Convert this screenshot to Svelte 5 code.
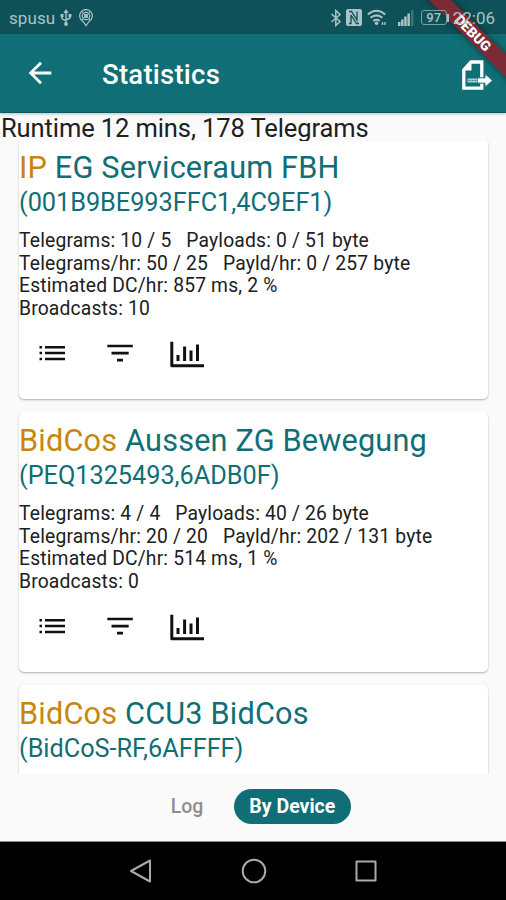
<!--
  STATISTICS SCREEN

  Telegram statistics grouped by device. Every device gets a card with its
  counters and three actions: list, filter and chart.

  @format
-->

<script>
  const devices = [
    {
      protocol: 'IP',
      name: 'EG Serviceraum FBH',
      id: '(001B9BE993FFC1,4C9EF1)',
      lines: [
        'Telegrams: 10 / 5   Payloads: 0 / 51 byte',
        'Telegrams/hr: 50 / 25   Payld/hr: 0 / 257 byte',
        'Estimated DC/hr: 857 ms, 2 %',
        'Broadcasts: 10',
      ],
    },
    {
      protocol: 'BidCos',
      name: 'Aussen ZG Bewegung',
      id: '(PEQ1325493,6ADB0F)',
      lines: [
        'Telegrams: 4 / 4   Payloads: 40 / 26 byte',
        'Telegrams/hr: 20 / 20   Payld/hr: 202 / 131 byte',
        'Estimated DC/hr: 514 ms, 1 %',
        'Broadcasts: 0',
      ],
    },
    {
      protocol: 'BidCos',
      name: 'CCU3 BidCos',
      id: '(BidCoS-RF,6AFFFF)',
      lines: [],
    },
  ];

  const tabs = ['Log', 'By Device'];

  let activeTab = $state('By Device');
</script>

<div class="screen">
  <div class="banner">DEBUG</div>

  <div class="status-bar">
    <span class="carrier">spusu</span>
    <svg class="usb" width="12" height="18" viewBox="0 0 12 18">
      <path d="M6 3v12M2 6v3.5l4 2.5M10 6v3L6 11" fill="none" stroke="currentColor" stroke-width="1.4" />
      <path d="M6 0l2.6 4H3.4z" fill="currentColor" />
      <circle cx="6" cy="15" r="1.9" fill="currentColor" />
      <path d="M.5 5h3v3h-3zM8.5 5h3v3h-3z" fill="currentColor" />
    </svg>
    <svg class="pin" width="16" height="18" viewBox="0 0 16 18" fill="none" stroke="currentColor" stroke-width="1.2">
      <path d="M5 12.4A6.3 6.3 0 1 1 11 12.4L8 16.8z" />
      <circle cx="8" cy="7" r="3.7" />
      <circle cx="8" cy="7" r="1.4" fill="currentColor" />
      <path d="M4 3l8 8M12 3l-8 8" stroke-width=".9" />
    </svg>
    <span class="spacer"></span>
    <svg class="bluetooth" width="12" height="18" viewBox="0 0 12 18" fill="none" stroke="currentColor" stroke-width="1.5">
      <path d="M1.5 5l8.5 7.5-4.2 4V1.5L10 5.500 1.5 13" />
    </svg>
    <svg class="nfc" width="16" height="17" viewBox="0 0 16 17">
      <rect width="16" height="17" rx="2" fill="currentColor" />
      <path d="M3 2.500h2.500l5.500 8.500V2.500M5 6v8.500h-2M13 14.500h-2.500L5 6" fill="none" stroke="#0e5158" stroke-width="1.3" />
    </svg>
    <svg class="wifi" width="20" height="17" viewBox="0 0 20 17">
      <path d="M.8 5.500Q9.500-2 18.200 5.500M3.500 8.800Q9.500 4 15.500 8.800M6.300 12Q9.500 9.500 12.700 12" fill="none" stroke="currentColor" stroke-width="2" />
      <circle cx="9.500" cy="14.300" r="1.800" fill="currentColor" />
      <path d="M15.500 16v-3M18 16v-3" stroke="currentColor" stroke-width="1.4" />
    </svg>
    <svg class="signal" width="16" height="16" viewBox="0 0 16 16" fill="currentColor">
      <path d="M0 12h2.500v4H0zM3.100 9.500h2.500V16H3.100zM6.200 6.500h2.500V16H6.200zM9.400 3.500h2.500V16H9.400z" />
      <path d="M13 0h2.500v16H13z" opacity=".3" />
    </svg>
    <span class="battery">97</span>
    <span class="battery-tip"></span>
    <span class="clock">22:06</span>
  </div>

  <header class="app-bar">
    <svg class="back" width="34" height="34" viewBox="0 0 24 24">
      <path d="M20 11H7.830l5.590-5.590L12 4l-8 8 8 8 1.410-1.410L7.830 13H20v-2z" fill="#fff" />
    </svg>
    <h1>Statistics</h1>
    <svg class="export" width="32" height="30" viewBox="0 0 32 30">
      <path d="M10 2H20.800V28.200H2.800V10z" fill="none" stroke="#fff" stroke-width="3.300" />
      <path d="M2 10.500L10.500 2v8.500z" fill="#fff" />
      <path d="M16.500 17.800h7.500v-4l7.500 6.700-7.500 6.700v-4h-7.500z" fill="#fff" stroke="#106e76" stroke-width="1" />
      <path d="M6.500 20.500h10" stroke="#fff" stroke-width="4" opacity=".65" />
      <path d="M7.500 20.500h8" stroke="#106e76" stroke-width="1" stroke-dasharray="2 1" opacity=".7" />
    </svg>
  </header>

  <p class="runtime">Runtime 12 mins, 178 Telegrams</p>

  <main class="list">
    {#each devices as device (device.id)}
      <article class="card">
        <h2><span class="protocol">{device.protocol}</span> {device.name}</h2>
        <h3>{device.id}</h3>
        <div class="stats">
          {#each device.lines as line}
            <p>{line}</p>
          {/each}
        </div>
        <div class="actions">
          <svg width="34" height="34" viewBox="0 0 34 34" stroke="#111" stroke-width="2.5">
            <path d="M4.500 11.200H7M4.500 17.100H7M4.500 23H7M10 11.200h20M10 17.100h20M10 23h20" />
          </svg>
          <svg width="34" height="34" viewBox="0 0 34 34" stroke="#111" stroke-width="2.7">
            <path d="M4.300 10h25.500M8.500 17.200h17.200M14 24.200h6" />
          </svg>
          <svg width="34" height="34" viewBox="0 0 34 34" fill="none" stroke="#111" stroke-width="3">
            <path d="M1.800 5.800V29.700H34" stroke-linejoin="round" />
            <path d="M8 19v6M14.600 10.500V25M21 14.500V25M27.500 8.500V25" />
          </svg>
        </div>
      </article>
    {/each}
  </main>

  <nav class="tabs">
    {#each tabs as tab}
      <button class:active={tab === activeTab} onclick={() => (activeTab = tab)}>{tab}</button>
    {/each}
  </nav>

  <div class="system-nav">
    <svg width="24" height="26" viewBox="0 0 24 26">
      <path d="M21 2.500v21L2 13z" />
    </svg>
    <svg width="26" height="26" viewBox="0 0 26 26">
      <circle cx="13" cy="13" r="11.300" />
    </svg>
    <svg width="24" height="26" viewBox="0 0 24 26">
      <rect x="2.500" y="3.500" width="19" height="19" />
    </svg>
  </div>
</div>

<style>
  :global(body) {
    background: #fafafa;
  }

  .screen {
    position: relative;
    display: flex;
    flex-direction: column;
    width: 506px;
    height: 900px;
    overflow: hidden;
    font-family: Roboto, 'Liberation Sans', sans-serif;
    color: #202020;
    background: #fafafa;
  }

  h1,
  h2,
  h3,
  p {
    margin: 0;
    font-weight: 400;
    white-space: pre;
  }

  svg {
    flex: none;
    display: block;
  }

  /* Corner ribbon, lies over both bars but below the status icons */
  .banner {
    position: absolute;
    top: 25px;
    left: 393px;
    z-index: 1;
    width: 160px;
    height: 16px;
    color: #fff;
    font-size: 14px;
    font-weight: 900;
    line-height: 16px;
    text-align: center;
    background: #7d2a35;
    box-shadow: 0 0 7px rgba(0, 0, 0, 0.45);
    transform: rotate(45deg);
  }

  .status-bar {
    display: flex;
    flex: none;
    align-items: center;
    height: 34px;
    padding: 1px 11px 0 9px;
    box-sizing: border-box;
    color: #a9c3c6;
    font-size: 17px;
    background: #0e5158;
  }

  .status-bar > * {
    position: relative;
    z-index: 2;
  }

  .carrier {
    letter-spacing: 0.1px;
  }

  .usb {
    margin-left: 5px;
  }

  .pin {
    margin-left: 6px;
  }

  .spacer {
    flex: 1;
  }

  .nfc {
    margin-left: 4px;
  }

  .wifi {
    margin-left: 5px;
  }

  .signal {
    margin-left: 11px;
  }

  .battery {
    width: 24px;
    height: 13px;
    margin-left: 7px;
    font-size: 13px;
    font-weight: 500;
    line-height: 14px;
    text-align: center;
    border: 1px solid #7b9fa3;
    border-radius: 3px;
  }

  .battery-tip {
    width: 2px;
    height: 8px;
    background: #a9c3c6;
  }

  .clock {
    margin-left: 4px;
    font-size: 17px;
  }

  .app-bar {
    display: flex;
    flex: none;
    align-items: center;
    height: 79px;
    padding: 0 13px 0 23px;
    box-sizing: border-box;
    background: #106e76;
    border-bottom: 1px solid #0b5c63;
    box-shadow: 0 1px 3px rgba(0, 0, 0, 0.25);
  }

  h1 {
    flex: 1;
    margin: 2px 0 0 45px;
    color: #fff;
    font-size: 27.5px;
    font-weight: 500;
    letter-spacing: 0.25px;
  }

  .export {
    margin-top: 3px;
  }

  .runtime {
    height: 28px;
    padding-left: 1px;
    font-size: 25.5px;
    line-height: 31px;
    letter-spacing: -0.1px;
  }

  .list {
    flex: none;
    height: 633px;
    padding: 0 18px 0 19px;
    overflow: hidden;
  }

  .card {
    height: 260px;
    margin-bottom: 13px;
    padding-top: 11px;
    box-sizing: border-box;
    background: #fff;
    border-radius: 5px;
    box-shadow: 0 1px 2px rgba(0, 0, 0, 0.3);
  }

  /* The list is scrolled by two pixels */
  .card:first-child {
    margin-top: -2px;
  }

  h2 {
    height: 36px;
    color: #106e76;
    font-size: 30.7px;
    line-height: 36px;
    letter-spacing: 0.17px;
  }

  .protocol {
    color: #c8860f;
  }

  h3 {
    height: 33px;
    color: #106e76;
    font-size: 25.3px;
    line-height: 33px;
    letter-spacing: -0.03px;
  }

  .stats {
    margin-top: 11px;
    font-size: 19.3px;
    line-height: 22.5px;
    letter-spacing: 0.17px;
  }

  .actions {
    display: flex;
    gap: 33.5px;
    margin-top: 16px;
    padding-left: 16px;
  }

  .tabs {
    display: flex;
    flex: none;
    align-items: center;
    justify-content: center;
    height: 68px;
    padding: 0 0 2px;
    box-sizing: border-box;
    border-bottom: 1px solid #888;
  }

  button {
    height: 35px;
    padding: 0 15.5px;
    color: #8e8e8e;
    font: 500 19.5px/33px Roboto, sans-serif;
    background: none;
    border: 0;
    border-radius: 18px;
  }

  button.active {
    margin-left: 15px;
    color: #fff;
    font-weight: 700;
    background: #106e76;
  }

  .system-nav {
    display: flex;
    flex: 1;
    align-items: center;
    justify-content: center;
    gap: 87.5px;
    padding-left: 1px;
    background: #000;
  }

  .system-nav svg {
    fill: none;
    stroke: #aaa;
    stroke-width: 2;
    stroke-linejoin: round;
  }
</style>
